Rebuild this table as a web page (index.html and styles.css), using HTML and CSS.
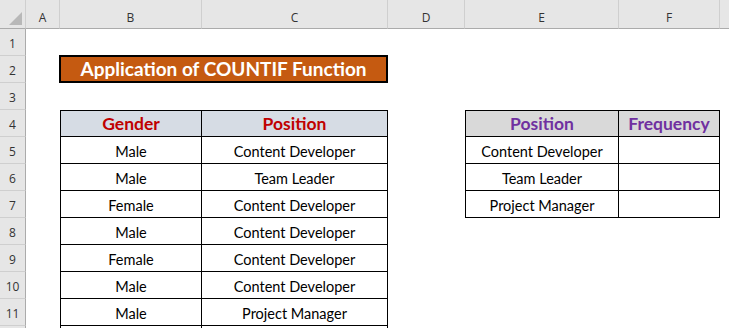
FILE: index.html
```html
<!DOCTYPE html>
<html>
<head>
<meta charset="utf-8">
<link rel="stylesheet" href="styles.css">
</head>
<body>
<div class="sheet">
  <div class="corner"><span class="tri"></span></div>
  <div class="colhdr">A</div><div class="colhdr">B</div><div class="colhdr">C</div><div class="colhdr">D</div><div class="colhdr">E</div><div class="colhdr">F</div><div class="colhdr last"></div>

  <div class="rowhdr">1</div><div class="fill r1"></div>

  <div class="rowhdr">2</div><div class="cell"></div><div class="title">Application of COUNTIF Function</div><div class="fill r2"></div>

  <div class="rowhdr">3</div><div class="fill r3"></div>

  <div class="rowhdr">4</div><div class="cell"></div>
  <div class="t th blue first">Gender</div><div class="t th blue">Position</div>
  <div class="cell"></div>
  <div class="t th gray first purple">Position</div><div class="t th gray purple">Frequency</div><div class="cell"></div>

  <div class="rowhdr">5</div><div class="cell"></div>
  <div class="t first">Male</div><div class="t">Content Developer</div>
  <div class="cell"></div>
  <div class="t first">Content Developer</div><div class="t"></div><div class="cell"></div>

  <div class="rowhdr">6</div><div class="cell"></div>
  <div class="t first">Male</div><div class="t">Team Leader</div>
  <div class="cell"></div>
  <div class="t first">Team Leader</div><div class="t"></div><div class="cell"></div>

  <div class="rowhdr">7</div><div class="cell"></div>
  <div class="t first">Female</div><div class="t">Content Developer</div>
  <div class="cell"></div>
  <div class="t first">Project Manager</div><div class="t"></div><div class="cell"></div>

  <div class="rowhdr">8</div><div class="cell"></div>
  <div class="t first">Male</div><div class="t">Content Developer</div><div class="fill r4"></div>

  <div class="rowhdr">9</div><div class="cell"></div>
  <div class="t first">Female</div><div class="t">Content Developer</div><div class="fill r4"></div>

  <div class="rowhdr">10</div><div class="cell"></div>
  <div class="t first">Male</div><div class="t">Content Developer</div><div class="fill r4"></div>

  <div class="rowhdr">11</div><div class="cell"></div>
  <div class="t first">Male</div><div class="t">Project Manager</div><div class="fill r4"></div>

  <div class="rowhdr stub"></div><div class="cell"></div>
  <div class="t first stub"></div><div class="t stub"></div><div class="fill r4"></div>
</div>
</body>
</html>
```

FILE: styles.css
```css
* { box-sizing: border-box; }
html, body { margin: 0; padding: 0; background: #fff; overflow: hidden; }
body { font-family: "Lato", "Open Sans", sans-serif; color: #000; }

.sheet {
  display: grid;
  grid-template-columns: 26px 34px 142px 186px 77px 154px 101px 1fr;
  grid-template-rows: 29px repeat(11, 27px) 2px;
  width: 729px;
  height: 328px;
  overflow: hidden;
}

.corner {
  background: #e6e6e6;
  border-right: 1px solid #cfcfcf;
  border-bottom: 1px solid #ababab;
  position: relative;
}
.tri {
  position: absolute;
  right: 3px;
  bottom: 3px;
  width: 0; height: 0;
  border-left: 13px solid transparent;
  border-bottom: 13px solid #b8b8b8;
}

.colhdr {
  background: #e6e6e6;
  border-right: 1px solid #cfcfcf;
  border-bottom: 1px solid #ababab;
  display: flex;
  align-items: center;
  justify-content: center;
  padding-top: 6px;
  font-family: "Open Sans", "Noto Sans", sans-serif;
  font-size: 12px;
  color: #333;
}
.colhdr.last { border-right: none; }

.rowhdr {
  background: #e6e6e6;
  border-right: 1px solid #ababab;
  border-bottom: 1px solid #cfcfcf;
  display: flex;
  align-items: flex-end;
  justify-content: center;
  padding-bottom: 3px;
  font-family: "Open Sans", "Noto Sans", sans-serif;
  font-size: 12px;
  color: #333;
}
.rowhdr.stub { padding: 0; border-bottom: none; }

.fill { grid-column: 2 / -1; }

.title {
  grid-column: 3 / 5;
  margin: -1px 0 0 -1px;
  background: #c55a11;
  border: 2px solid #000;
  color: #fff;
  font-weight: 700;
  font-size: 19px;
  display: flex;
  align-items: center;
  justify-content: center;
  padding-bottom: 1px;
}
.title + .fill { grid-column: 5 / -1; }

.t {
  border-right: 1px solid #000;
  border-bottom: 1px solid #000;
  display: flex;
  align-items: flex-end;
  justify-content: center;
  padding-bottom: 3px;
  font-size: 14.5px;
}
.t.first { border-left: 1px solid #000; }
.t.stub { border-bottom: none; padding: 0; }
.th {
  border-top: 1px solid #000;
  font-weight: 700;
  font-size: 17.5px;
  padding-bottom: 2px;
  color: #c00000;
}
.th.blue { background: #d6dce4; }
.th.gray { background: #d9d9d9; }
.th.purple { color: #7030a0; }
.r4 { grid-column: 5 / -1; }
```
